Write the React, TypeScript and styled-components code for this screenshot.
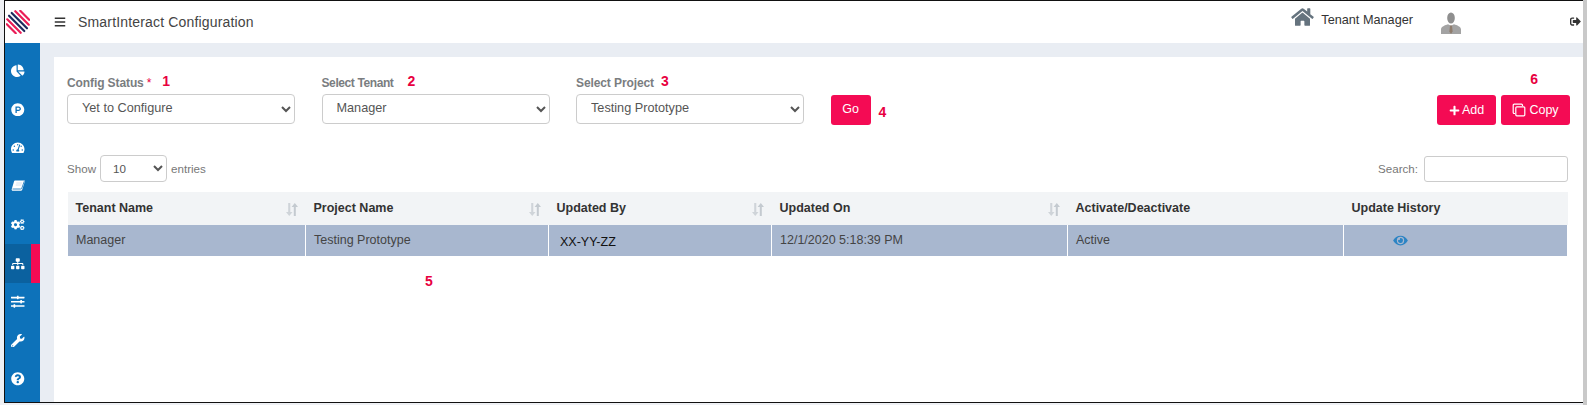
import React from "react";
import styled, { createGlobalStyle } from "styled-components";
import {
  FaBars, FaChartPie, FaCogs, FaEye, FaHome, FaPlus, FaProductHunt,
  FaQuestionCircle, FaSignOutAlt, FaSitemap, FaSlidersH, FaTachometerAlt, FaWrench,
} from "react-icons/fa";

const Global = createGlobalStyle`
  html, body { margin: 0; padding: 0; height: 405px; overflow: hidden; background: #eef0f4; }
  * { box-sizing: border-box; }
  body { font-family: "Liberation Sans", Arial, sans-serif; }
`;

const Page = styled.div`
  display: flex;
  height: 405px;
  padding-left: 4px;
`;
const Frame = styled.div`
  flex: 1;
  height: 403px;
  min-width: 0;
  display: flex;
  flex-direction: column;
  border-left: 1px solid #111;
  border-top: 1px solid #111;
  border-bottom: 1px solid #111;
  background: #fff;
  overflow: hidden;
`;
const Scrollbar = styled.div`
  width: 4px;
  background: #c9c9c9;
`;
const Header = styled.header`
  height: 42px;
  flex: none;
  display: flex;
  align-items: center;
  background: #fff;
  padding-left: 1px;
  color: #333;
`;
const Logo = styled.svg`
  width: 24px;
  height: 24px;
  margin-right: 24px;
  flex: none;
`;
const MenuIcon = styled(FaBars)`
  width: 12px;
  height: 12px;
  color: #333;
  margin-right: 12px;
`;
const Title = styled.div`
  font-size: 14px;
  letter-spacing: 0.17px;
  color: #444;
`;
const HeaderRight = styled.div`
  margin-left: auto;
  display: flex;
  align-items: center;
  height: 100%;
`;
const HomeIcon = styled(FaHome)`
  width: 23px;
  height: 20px;
  color: #65737e;
  margin-right: 7px;
  margin-top: -10px;
`;
const TenantLabel = styled.span`
  font-size: 12.7px;
  color: #333;
  margin-right: 28px;
  margin-top: -5px;
`;
const UserIcon = styled.svg`
  width: 20px;
  height: 22px;
  margin-right: 109px;
  margin-top: 2px;
`;
const LogoutIcon = styled(FaSignOutAlt)`
  width: 11px;
  height: 11px;
  color: #333;
  margin-right: 2px;
  margin-top: -1px;
`;
const Body = styled.div`
  flex: 1;
  display: flex;
  min-height: 0;
`;
const Sidebar = styled.nav`
  width: 35px;
  flex: none;
  background: #0d72ba;
  display: flex;
  flex-direction: column;
  padding-top: 8.500px;
`;
const NavItem = styled.div<{ $active?: boolean }>`
  height: 38.500px;
  flex: none;
  display: flex;
  align-items: center;
  padding-left: 6px;
  color: #fff;
  font-size: 13.500px;
  background: ${(p) => (p.$active ? "#0b619f" : "transparent")};
  border-right: ${(p) => (p.$active ? "9px solid #f40b54" : "0")};
`;
const Main = styled.main`
  flex: 1;
  min-width: 0;
  background: #e9edf3;
  padding: 14px 0 0 14px;
  display: flex;
`;
const Panel = styled.section`
  flex: 1;
  min-width: 0;
  background: #fff;
  padding: 16px 13px 0 13px;
`;
const FilterRow = styled.div`
  display: flex;
  align-items: flex-start;
`;
const Field = styled.div`
  width: 228px;
  margin-right: 26.500px;
`;
const FieldLabel = styled.label<{ $tight?: boolean }>`
  display: block;
  height: 16px;
  margin-bottom: 5px;
  font-size: 12px;
  line-height: 16px;
  font-weight: 700;
  color: #7a7d80;
  white-space: nowrap;
  letter-spacing: ${(p) => (p.$tight ? "-0.4px" : "-0.1px")};
`;
const Required = styled.span`
  color: #e8003f;
  font-weight: 400;
  margin-left: 3px;
`;
const Marker = styled.span<{ $gap?: number }>`
  color: #e8003f;
  font-size: 14px;
  font-weight: 700;
  line-height: 16px;
  letter-spacing: 0;
  margin-left: ${(p) => p.$gap ?? 0}px;
`;
const LabelMarker = styled(Marker)`
  vertical-align: 1px;
`;
const Select = styled.select`
  width: 100%;
  height: 30px;
  border: 1px solid #ccc;
  border-radius: 4px;
  background: #fff;
  color: #555;
  font-family: inherit;
  font-size: 12.700px;
  padding: 0 0 3px 10px;
`;
const GoGroup = styled.div`
  display: flex;
  align-items: center;
  padding-top: 22px;
`;
const Button = styled.button`
  display: inline-flex;
  align-items: center;
  justify-content: center;
  height: 30px;
  border: 0;
  border-radius: 3px;
  background: #f40b54;
  color: #fff;
  font-family: inherit;
  font-size: 12.500px;
  font-weight: 400;
  padding: 0;
`;
const GoButton = styled(Button)`
  width: 40px;
  margin-right: 5px;
  padding-bottom: 3px;
`;
const GoMarker = styled(Marker)`
  margin-top: 4px;
`;
const Actions = styled.div`
  margin-left: auto;
  margin-top: -2px;
  display: flex;
  flex-direction: column;
`;
const ActionMarker = styled(Marker)`
  display: block;
  margin: 0 32px 8px 0;
  text-align: right;
`;
const ActionButtons = styled.div`
  display: flex;
  gap: 5px;
`;
const AddButton = styled(Button)`
  width: 59px;
  gap: 2px;
  svg { width: 11px; height: 11px; }
`;
const CopyButton = styled(Button)`
  width: 69px;
  gap: 3px;
  svg { width: 14px; height: 14px; }
`;
const TableControls = styled.div`
  display: flex;
  align-items: center;
  justify-content: space-between;
  margin: 30px 2px 10px 0;
  height: 27px;
  font-size: 11.600px;
  color: #777;
`;
const ControlGroup = styled.label`
  display: flex;
  align-items: center;
  gap: 4px;
`;
const LengthSelect = styled(Select)`
  width: 67px;
  height: 27px;
  font-size: 11.600px;
  padding: 0 0 0 8px;
`;
const SearchInput = styled.input`
  width: 144px;
  height: 26px;
  border: 1px solid #ccc;
  border-radius: 3px;
  margin-left: 2px;
  background: #fff;
`;
const Table = styled.table`
  width: 1500px;
  table-layout: fixed;
  border-collapse: collapse;
  font-size: 12.500px;
`;
const HeadCell = styled.th<{ $w: number }>`
  width: ${(p) => p.$w}px;
  height: 33px;
  background: #f2f4f6;
  padding: 0 8px 2px 8px;
  text-align: left;
  color: #333;
  font-weight: 700;
`;
const HeadInner = styled.div`
  display: flex;
  align-items: center;
  justify-content: space-between;
`;
const SortIcon = styled.svg`
  width: 12px;
  height: 13px;
  flex: none;
  margin-top: 3px;
`;
const Cell = styled.td`
  height: 31px;
  background: #a8b7cf;
  border-left: 1px solid #fff;
  padding: 0 8px 2px;
  color: #444;
`;
const CodeText = styled.span`
  display: block;
  color: #111;
  padding: 4px 0 0 3px;
`;
const EyeCell = styled(Cell)`
  padding-left: 49px;
  border-right: 1px solid #fff;
  svg { display: block; width: 15px; height: 13px; color: #2c84c4; margin-top: 2px; }
`;
const Note = styled(Marker)`
  display: block;
  margin: 17px 0 0 358px;
`;

const Sort = () => (
  <SortIcon viewBox="0 0 12 13" aria-hidden="true">
    <path d="M2.200 0h2.100v9h2.200L3.250 13 0 9h2.200z" fill="#cfd4d9" />
    <path d="M8.200 13h2V4h2.200L9.200 0 6 4h2.200z" fill="#c4cad0" transform="translate(-.4 0)" />
  </SortIcon>
);

const BookIcon = () => (
  <svg viewBox="0 0 14 14" width="14" height="14" aria-hidden="true">
    <path
      fill="#fff"
      d="M4 1.500h9.200c.5 0 .8.400.6.900l-2.600 8.300c-.2.700-.7 1.100-1.300 1.100H1.800c-.8 0-1.300-.6-1.100-1.500L3 2.400c.1-.5.500-.9 1-.9z"
    />
    <path fill="none" stroke="#0d72ba" strokeWidth=".8" d="M1.500 10h8.300c.5 0 .8-.3 1-.8l2.500-7" />
    <path fill="none" stroke="#c9dcec" strokeWidth=".8" d="M5.300 4h5.700M4.700 6h5.700" />
  </svg>
);

const columns: [string, number, boolean][] = [
  ["Tenant Name", 238, true],
  ["Project Name", 243, true],
  ["Updated By", 223, true],
  ["Updated On", 296, true],
  ["Activate/Deactivate", 276, false],
  ["Update History", 224, false],
];

const navIcons = [FaChartPie, FaProductHunt, FaTachometerAlt, BookIcon, FaCogs, FaSitemap, FaSlidersH, FaWrench, FaQuestionCircle];

const logoStripes: [number, number, string][] = [
  [2.500, 7.300, "#ea1c56"],
  [6.300, 10.500, "#ea1c56"],
  [10.100, 11.800, "#1f2b5e"],
  [13.900, 11.800, "#1f2b5e"],
  [17.700, 10.500, "#ea1c56"],
  [21.500, 7.300, "#ea1c56"],
];

export default function App() {
  return (
    <>
      <Global />
      <Page>
        <Frame>
          <Header>
            <Logo viewBox="0 0 24 24" aria-label="logo">
              <g transform="rotate(45 12 12)" strokeWidth="2.200" strokeLinecap="round">
                {logoStripes.map(([y, half, color]) => (
                  <line key={y} x1={12 - half + 1} x2={12 + half - 1} y1={y} y2={y} stroke={color} />
                ))}
              </g>
            </Logo>
            <MenuIcon />
            <Title>SmartInteract Configuration</Title>
            <HeaderRight>
              <HomeIcon />
              <TenantLabel>Tenant Manager</TenantLabel>
              <UserIcon viewBox="0 0 20 22" aria-hidden="true">
                <ellipse cx="10" cy="6" rx="3.800" ry="5.600" fill="#8f8f8f" />
                <path d="M0 22v-4.500c0-3 4-4.300 7-5.300l3 1.500 3-1.500c3 1 7 2.300 7 5.300V22z" fill="#a3a3a3" />
                <path d="M9 13.500h2l.6 6-1.600 2.500-1.600-2.500z" fill="#8f7d6e" />
              </UserIcon>
              <LogoutIcon />
            </HeaderRight>
          </Header>
          <Body>
            <Sidebar>
              {navIcons.map((Icon, i) => (
                <NavItem key={i} $active={i === 5}><Icon /></NavItem>
              ))}
            </Sidebar>
            <Main>
              <Panel>
                <FilterRow>
                  <Field>
                    <FieldLabel>Config Status<Required>*</Required><LabelMarker $gap={11}>1</LabelMarker></FieldLabel>
                    <Select defaultValue="Yet to Configure"><option>Yet to Configure</option></Select>
                  </Field>
                  <Field>
                    <FieldLabel $tight>Select Tenant<LabelMarker $gap={14}>2</LabelMarker></FieldLabel>
                    <Select defaultValue="Manager"><option>Manager</option></Select>
                  </Field>
                  <Field>
                    <FieldLabel>Select Project<LabelMarker $gap={7}>3</LabelMarker></FieldLabel>
                    <Select defaultValue="Testing Prototype"><option>Testing Prototype</option></Select>
                  </Field>
                  <GoGroup>
                    <GoButton>Go</GoButton>
                    <GoMarker $gap={3}>4</GoMarker>
                  </GoGroup>
                  <Actions>
                    <ActionMarker>6</ActionMarker>
                    <ActionButtons>
                      <AddButton><FaPlus />Add</AddButton>
                      <CopyButton>
                        <svg viewBox="0 0 14 14" fill="none" stroke="#fff" strokeWidth="1.200" aria-hidden="true">
                          <path d="M3 10.500H2.200a1 1 0 0 1-1-1V2.200a1 1 0 0 1 1-1h7.300a1 1 0 0 1 1 1V3" />
                          <rect x="3.800" y="3.800" width="9" height="9" rx="1" />
                        </svg>
                        Copy
                      </CopyButton>
                    </ActionButtons>
                  </Actions>
                </FilterRow>
                <TableControls>
                  <ControlGroup>
                    Show
                    <LengthSelect defaultValue="10"><option>10</option></LengthSelect>
                    entries
                  </ControlGroup>
                  <ControlGroup>Search:<SearchInput /></ControlGroup>
                </TableControls>
                <Table>
                  <thead>
                    <tr>
                      {columns.map(([name, w, sortable]) => (
                        <HeadCell key={name} $w={w}>
                          <HeadInner>{name}{sortable && <Sort />}</HeadInner>
                        </HeadCell>
                      ))}
                    </tr>
                  </thead>
                  <tbody>
                    <tr>
                      <Cell>Manager</Cell>
                      <Cell>Testing Prototype</Cell>
                      <Cell><CodeText>XX-YY-ZZ</CodeText></Cell>
                      <Cell>12/1/2020 5:18:39 PM</Cell>
                      <Cell>Active</Cell>
                      <EyeCell><FaEye /></EyeCell>
                    </tr>
                  </tbody>
                </Table>
                <Note>5</Note>
              </Panel>
            </Main>
          </Body>
        </Frame>
        <Scrollbar />
      </Page>
    </>
  );
}
